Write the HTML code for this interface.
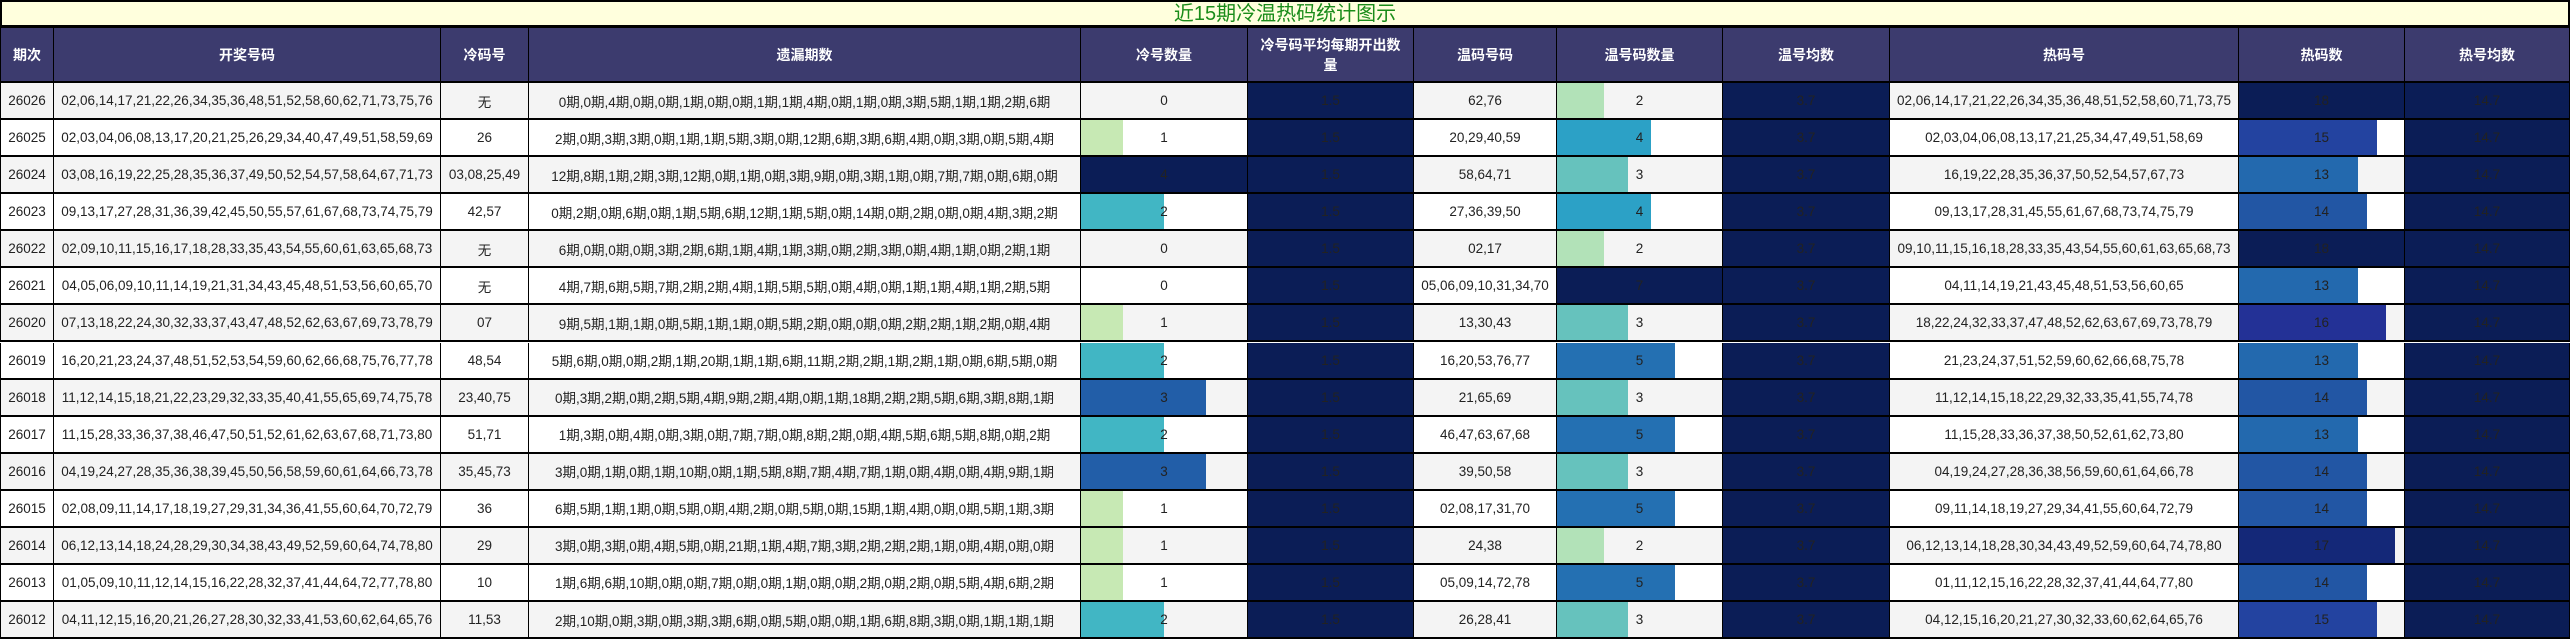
<!DOCTYPE html>
<html><head><meta charset="utf-8"><style>
*{box-sizing:border-box;margin:0;padding:0}
body{width:2570px;height:639px;background:#fff;font-family:"Liberation Sans","Noto Sans CJK SC",sans-serif;overflow:hidden;position:relative}
.title{position:absolute;left:0;top:0;width:2570px;height:28px;background:#ffffdd;border:2px solid #000;border-bottom:3px solid #000;color:#1a8c1a;font-size:20px;text-align:center;line-height:24px}
.row{position:absolute;left:0;width:2570px;display:grid;grid-template-columns:53px 387px 88px 552px 167px 166px 143px 166px 167px 349px 166px 166px;border-bottom:2px solid #000}
.row>div{border-left:1px solid #000;position:relative;display:flex;align-items:center;justify-content:center;white-space:nowrap;overflow:hidden;font-size:13.5px;color:#222}
.row>div:last-child{border-right:1px solid #000}
.hd{top:28px;height:55px;background:#3c3b6e}
.hd>div{color:#fff!important;font-weight:bold;font-size:14px!important;text-align:center;white-space:normal!important;line-height:20px;padding:0 6px}
.g{background:#f4f4f4}.w{background:#fff}
.d{background:#0b1d56}
.b{position:absolute;left:0;top:0;bottom:0}
.row span{position:relative}
</style></head><body>
<div class="title">近15期冷温热码统计图示</div>
<div class="row hd"><div>期次</div><div>开奖号码</div><div>冷码号</div><div>遗漏期数</div><div>冷号数量</div><div>冷号码平均每期开出数量</div><div>温码号码</div><div>温号码数量</div><div>温号均数</div><div>热码号</div><div>热码数</div><div>热号均数</div></div>
<div id="rows"></div>
<script>
(function(){
var R=[
["26026","02,06,14,17,21,22,26,34,35,36,48,51,52,58,60,62,71,73,75,76","无","0期,0期,4期,0期,0期,1期,0期,0期,1期,1期,4期,0期,1期,0期,3期,5期,1期,1期,2期,6期",0,"62,76",2,"02,06,14,17,21,22,26,34,35,36,48,51,52,58,60,71,73,75",18],
["26025","02,03,04,06,08,13,17,20,21,25,26,29,34,40,47,49,51,58,59,69","26","2期,0期,3期,3期,0期,1期,1期,5期,3期,0期,12期,6期,3期,6期,4期,0期,3期,0期,5期,4期",1,"20,29,40,59",4,"02,03,04,06,08,13,17,21,25,34,47,49,51,58,69",15],
["26024","03,08,16,19,22,25,28,35,36,37,49,50,52,54,57,58,64,67,71,73","03,08,25,49","12期,8期,1期,2期,3期,12期,0期,1期,0期,3期,9期,0期,3期,1期,0期,7期,7期,0期,6期,0期",4,"58,64,71",3,"16,19,22,28,35,36,37,50,52,54,57,67,73",13],
["26023","09,13,17,27,28,31,36,39,42,45,50,55,57,61,67,68,73,74,75,79","42,57","0期,2期,0期,6期,0期,1期,5期,6期,12期,1期,5期,0期,14期,0期,2期,0期,0期,4期,3期,2期",2,"27,36,39,50",4,"09,13,17,28,31,45,55,61,67,68,73,74,75,79",14],
["26022","02,09,10,11,15,16,17,18,28,33,35,43,54,55,60,61,63,65,68,73","无","6期,0期,0期,0期,3期,2期,6期,1期,4期,1期,3期,0期,2期,3期,0期,4期,1期,0期,2期,1期",0,"02,17",2,"09,10,11,15,16,18,28,33,35,43,54,55,60,61,63,65,68,73",18],
["26021","04,05,06,09,10,11,14,19,21,31,34,43,45,48,51,53,56,60,65,70","无","4期,7期,6期,5期,7期,2期,2期,4期,1期,5期,5期,0期,4期,0期,1期,1期,4期,1期,2期,5期",0,"05,06,09,10,31,34,70",7,"04,11,14,19,21,43,45,48,51,53,56,60,65",13],
["26020","07,13,18,22,24,30,32,33,37,43,47,48,52,62,63,67,69,73,78,79","07","9期,5期,1期,1期,0期,5期,1期,1期,0期,5期,2期,0期,0期,0期,2期,2期,1期,2期,0期,4期",1,"13,30,43",3,"18,22,24,32,33,37,47,48,52,62,63,67,69,73,78,79",16],
["26019","16,20,21,23,24,37,48,51,52,53,54,59,60,62,66,68,75,76,77,78","48,54","5期,6期,0期,0期,2期,1期,20期,1期,1期,6期,11期,2期,2期,1期,2期,1期,0期,6期,5期,0期",2,"16,20,53,76,77",5,"21,23,24,37,51,52,59,60,62,66,68,75,78",13],
["26018","11,12,14,15,18,21,22,23,29,32,33,35,40,41,55,65,69,74,75,78","23,40,75","0期,3期,2期,0期,2期,5期,4期,9期,2期,4期,0期,1期,18期,2期,2期,5期,6期,3期,8期,1期",3,"21,65,69",3,"11,12,14,15,18,22,29,32,33,35,41,55,74,78",14],
["26017","11,15,28,33,36,37,38,46,47,50,51,52,61,62,63,67,68,71,73,80","51,71","1期,3期,0期,4期,0期,3期,0期,7期,7期,0期,8期,2期,0期,4期,5期,6期,5期,8期,0期,2期",2,"46,47,63,67,68",5,"11,15,28,33,36,37,38,50,52,61,62,73,80",13],
["26016","04,19,24,27,28,35,36,38,39,45,50,56,58,59,60,61,64,66,73,78","35,45,73","3期,0期,1期,0期,1期,10期,0期,1期,5期,8期,7期,4期,7期,1期,0期,4期,0期,4期,9期,1期",3,"39,50,58",3,"04,19,24,27,28,36,38,56,59,60,61,64,66,78",14],
["26015","02,08,09,11,14,17,18,19,27,29,31,34,36,41,55,60,64,70,72,79","36","6期,5期,1期,1期,0期,5期,0期,4期,2期,0期,5期,0期,15期,1期,4期,0期,0期,5期,1期,3期",1,"02,08,17,31,70",5,"09,11,14,18,19,27,29,34,41,55,60,64,72,79",14],
["26014","06,12,13,14,18,24,28,29,30,34,38,43,49,52,59,60,64,74,78,80","29","3期,0期,3期,0期,4期,5期,0期,21期,1期,4期,7期,3期,2期,2期,2期,1期,0期,4期,0期,0期",1,"24,38",2,"06,12,13,14,18,28,30,34,43,49,52,59,60,64,74,78,80",17],
["26013","01,05,09,10,11,12,14,15,16,22,28,32,37,41,44,64,72,77,78,80","10","1期,6期,6期,10期,0期,0期,7期,0期,0期,1期,0期,0期,2期,0期,2期,0期,5期,4期,6期,2期",1,"05,09,14,72,78",5,"01,11,12,15,16,22,28,32,37,41,44,64,77,80",14],
["26012","04,11,12,15,16,20,21,26,27,28,30,32,33,41,53,60,62,64,65,76","11,53","2期,10期,0期,3期,0期,3期,3期,6期,0期,5期,0期,0期,1期,6期,8期,3期,0期,1期,1期,1期",2,"26,28,41",3,"04,12,15,16,20,21,27,30,32,33,60,62,64,65,76",15]
];
var CC={1:"#c7e9b4",2:"#41b6c4",3:"#225ea8",4:"#0b1d56"};
var WC={2:"#b2e2b8",3:"#66c2bd",4:"#2ca1c6",5:"#2470b2",6:"#1a4890",7:"#0b1d56"};
var HC={13:"#2369ae",14:"#2256a4",15:"#2343a0",16:"#233196",17:"#142878",18:"#0b1d56"};
var bar=function(v,max,w,col){return v?'<div class="b" style="width:'+Math.round(v/max*w)+'px;background:'+col[v]+'"></div>':""};
var h="";
for(var i=0;i<R.length;i++){var r=R[i],bg=i%2?"w":"g",ty=83+i*37.07;
var hh=(i==14)?(639-ty):37.07;
h+='<div class="row" style="top:'+ty.toFixed(1)+'px;height:'+hh.toFixed(1)+'px">'+
'<div class="'+bg+'">'+r[0]+'</div><div class="'+bg+'">'+r[1]+'</div><div class="'+bg+'">'+r[2]+'</div><div class="'+bg+'">'+r[3]+'</div>'+
'<div class="'+bg+'">'+bar(r[4],4,166,CC)+'<span>'+r[4]+'</span></div>'+
'<div class="d">1.5</div><div class="'+bg+'">'+r[5]+'</div>'+
'<div class="'+bg+'">'+bar(r[6],7,165,WC)+'<span>'+r[6]+'</span></div>'+
'<div class="d">3.7</div><div class="'+bg+'">'+r[7]+'</div>'+
'<div class="'+bg+'">'+bar(r[8],18,165,HC)+'<span>'+r[8]+'</span></div>'+
'<div class="d">14.7</div></div>';}
document.getElementById("rows").innerHTML=h;
})();
</script>
</body></html>
